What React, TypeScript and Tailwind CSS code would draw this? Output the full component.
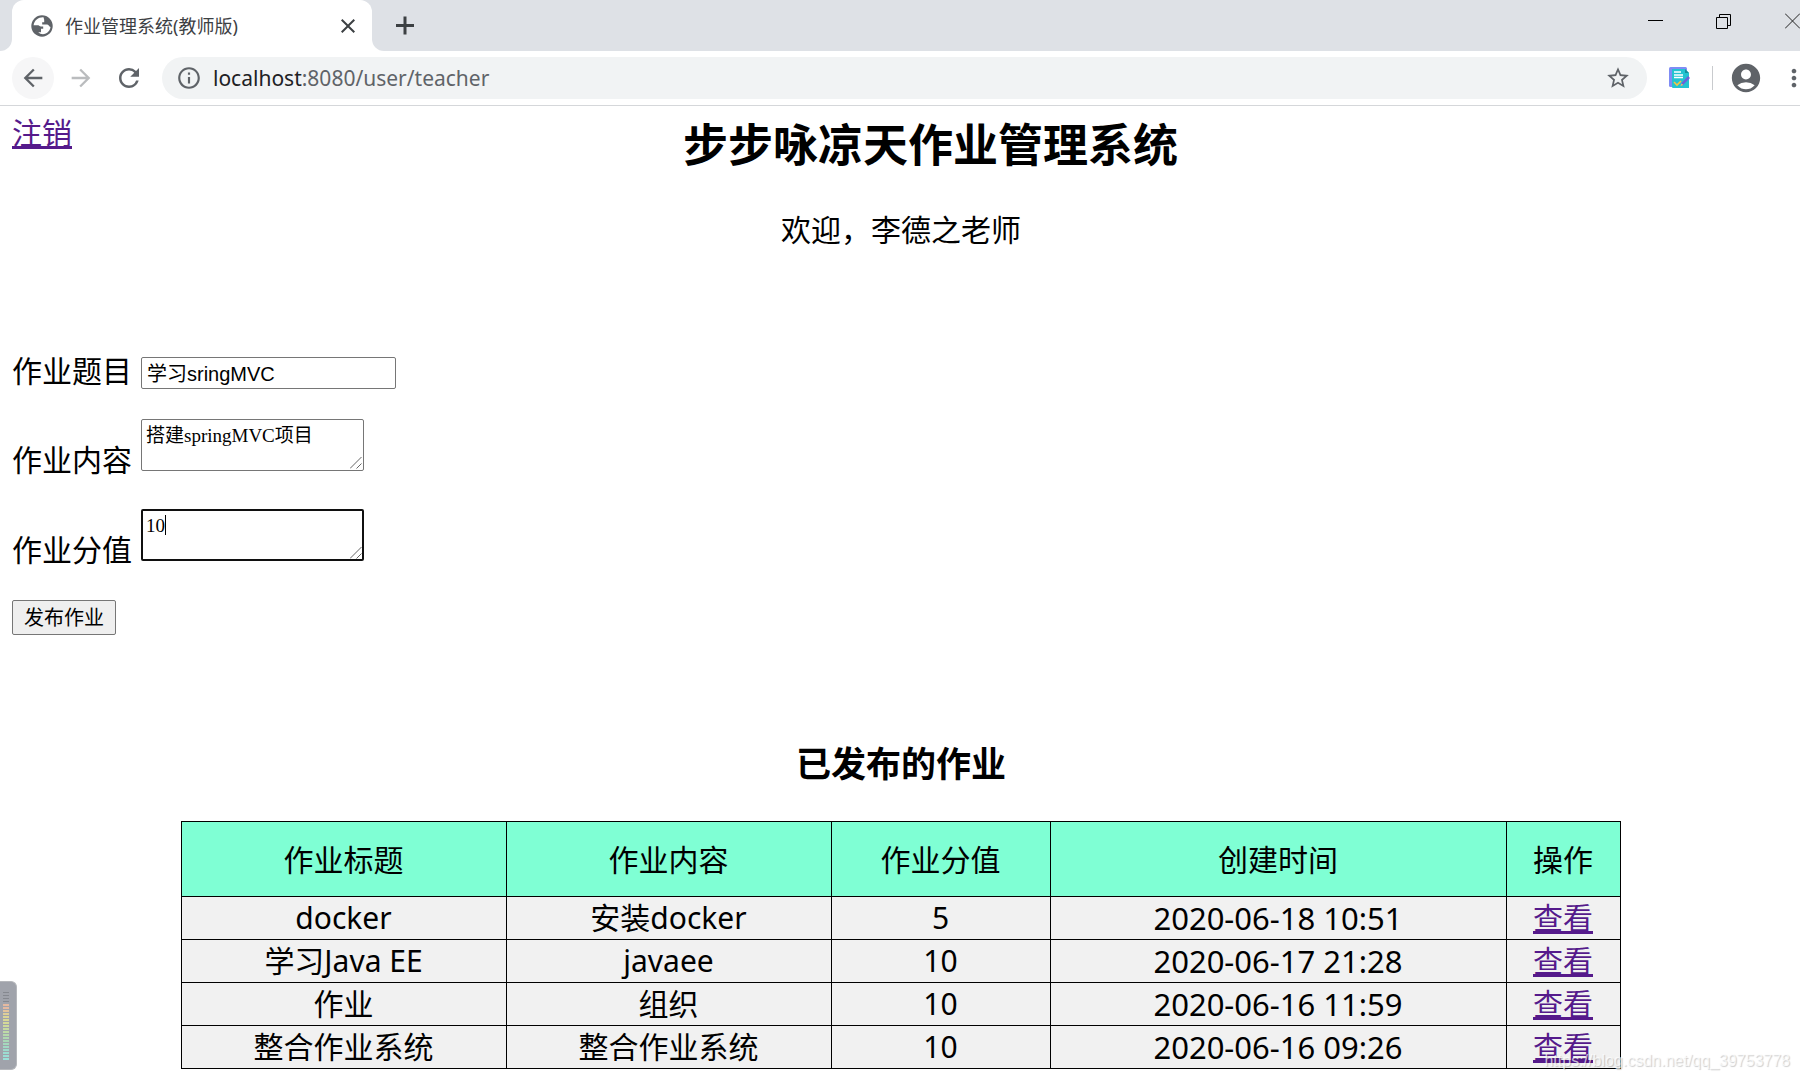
import { useEffect, useRef } from 'react'
import {
  MdAccountCircle,
  MdArrowBack,
  MdArrowForward,
  MdClose,
  MdInfoOutline,
  MdMoreVert,
  MdRefresh,
  MdStarBorder,
} from 'react-icons/md'

interface Homework {
  id: number
  title: string
  content: string
  score: number
  createdAt: string
}

const HOMEWORKS: Homework[] = [
  { id: 4, title: 'docker', content: '安装docker', score: 5, createdAt: '2020-06-18 10:51' },
  { id: 3, title: '学习Java EE', content: 'javaee', score: 10, createdAt: '2020-06-17 21:28' },
  { id: 2, title: '作业', content: '组织', score: 10, createdAt: '2020-06-16 11:59' },
  { id: 1, title: '整合作业系统', content: '整合作业系统', score: 10, createdAt: '2020-06-16 09:26' },
]

const COLUMNS = [
  { label: '作业标题', width: 'w-[325px]' },
  { label: '作业内容', width: 'w-[325px]' },
  { label: '作业分值', width: 'w-[219px]' },
  { label: '创建时间', width: 'w-[456px]' },
  { label: '操作', width: 'w-[114px]' },
]

// top to bottom
const METER_COLORS = [
  '#e5b9a0', '#e5b9a0', '#e2c49c', '#dfcf98', '#dbd596', '#d8d896', '#d5da98', '#cedb9c', '#c6dba1', '#bedaa6',
  '#b6d9ab', '#afd8b0', '#a9d8b6', '#a5d8bd', '#a1d8c4', '#9edacb', '#9cdcd1', '#9bded6', '#9be0d9',
]

function GlobeIcon() {
  return (
    <svg className="size-[22px]" viewBox="0 0 22 22">
      <circle cx="11" cy="11" r="10.700" fill="#5f6368" />
      <path
        d="M12.500 2.300C7.500 2 3.300 5.300 2.600 10.200h4.600c1.200 0 1.600 1.300 2.600 1.300h2.400v2.200H10v3.600H7.200c2.500 2.400 6.300 2.500 9 .5 1.800-1.400 3-3.500 3.300-5.800-1.500-.3-2-2.400-3.500-2.400h-4.800V7.200h2V4.800z"
        fill="#fff"
      />
    </svg>
  )
}

function TabStrip() {
  return (
    <div className="flex h-[51px] justify-between overflow-hidden bg-[#dee1e6]">
      <div className="flex">
        <div className="w-3 bg-white">
          <div className="h-full rounded-br-xl bg-[#dee1e6]" />
        </div>
        <div className="flex w-[360px] items-center rounded-t-xl bg-white pr-3 pl-[19px] text-[#3c4043]">
          <GlobeIcon />
          <span className="ml-3 flex-1 text-lg">作业管理系统(教师版)</span>
          <button type="button" aria-label="关闭标签页">
            <MdClose className="size-6" />
          </button>
        </div>
        <div className="w-3 bg-white">
          <div className="h-full rounded-bl-xl bg-[#dee1e6]" />
        </div>
        <button type="button" aria-label="打开新的标签页" className="ml-2 text-[#3c4043]">
          <svg className="size-7" viewBox="0 0 28 28" fill="none" stroke="currentColor" strokeWidth="3">
            <path d="M4 13.500h18M13 4.500v18" />
          </svg>
        </button>
      </div>
      <div className="flex h-[42px] items-center gap-[53px]">
        <button type="button" aria-label="最小化">
          <svg className="size-4" viewBox="0 0 16 16" fill="none" stroke="#000">
            <path d="M1 7.500h15" />
          </svg>
        </button>
        <button type="button" aria-label="还原">
          <svg className="size-4" viewBox="0 0 16 16" fill="none" stroke="#000">
            <path d="M0.500 4.500h11v11h-11zM3.500 4.500v-3h11v11h-3" />
          </svg>
        </button>
        <button type="button" aria-label="关闭">
          <svg className="h-4 w-[15px]" viewBox="0 0 15 16" fill="none" stroke="#222">
            <path d="M0 0.500l15 15M15 0.500l-15 15" />
          </svg>
        </button>
      </div>
    </div>
  )
}

function Toolbar() {
  return (
    <div className="flex h-[55px] items-center overflow-hidden border-b border-[#d5d7da] bg-white pl-3 text-[#5f6368]">
      <button type="button" aria-label="后退" className="flex size-[42px] items-center justify-center rounded-full bg-[#f6f6f7]">
        <MdArrowBack className="size-7" />
      </button>
      <button type="button" aria-label="前进" className="ml-[13px] text-[#babcbe]">
        <MdArrowForward className="size-7" />
      </button>
      <button type="button" aria-label="重新加载" className="ml-[19px]">
        <MdRefresh className="size-[30px]" />
      </button>
      <div className="ml-[18px] flex h-[42px] flex-1 items-center rounded-full bg-[#f1f3f4] pr-4 pl-[14px]">
        <MdInfoOutline className="size-[26px]" />
        <span className="ml-[11px] flex-1 pt-0.5 text-[21px]">
          <span className="text-[#202124]">localhost</span>:8080/user/teacher
        </span>
        <button type="button" aria-label="收藏">
          <MdStarBorder className="size-[26px]" />
        </button>
      </div>
      <button type="button" aria-label="扩展程序" className="ml-[22px]">
        <svg className="size-[22px]" viewBox="0 0 22 22">
          <rect x="0" y="0" width="18" height="20" rx="1.500" fill="#7f8cf5" />
          <path d="M3 2h13l4 4v15H4a1 1 0 0 1-1-1z" fill="#22c3d0" />
          <path d="M16 2v4h4z" fill="#148f9c" />
          <path d="M5 5h7M5 8h9M5 10.500h9" stroke="#fff" strokeWidth="1.400" />
          <path d="M5 15l3 3 4-4" fill="none" stroke="#f5c542" strokeWidth="1.600" />
          <path d="M19 9l2 2-7 7-2 1 .5-3z" fill="#6b62d9" />
          <path d="M12.500 16.500l1.800 1.500-2.800 1z" fill="#f3c56b" />
        </svg>
      </button>
      <div className="ml-[21px] h-6 w-px bg-[#c9cbce]" />
      <button type="button" aria-label="用户" className="ml-4">
        <MdAccountCircle className="size-[34px]" />
      </button>
      <button type="button" aria-label="更多" className="-mr-2 ml-[17px]">
        <MdMoreVert className="size-[28px]" />
      </button>
    </div>
  )
}

function ResizeGrip() {
  return (
    <svg
      className="pointer-events-none absolute right-0.5 bottom-0.5 size-3"
      viewBox="0 0 12 12"
      fill="none"
      stroke="#555"
      strokeWidth="0.900"
    >
      <path d="M0 11.500L11.500 0M6.500 11.500l5-5" />
    </svg>
  )
}

function HomeworkForm() {
  const scoreRef = useRef<HTMLTextAreaElement>(null)

  useEffect(() => {
    const el = scoreRef.current
    if (!el) return
    el.focus()
    el.setSelectionRange(el.value.length, el.value.length)
  }, [])

  return (
    <form className="flex flex-col items-start pl-3">
      <div className="flex h-10 items-center gap-[9px]">
        <label htmlFor="title" className="text-3xl">作业题目</label>
        <input
          id="title"
          type="text"
          defaultValue="学习sringMVC"
          className="mt-1 h-8 w-[255px] rounded-xs border border-[#767676] px-[5px] pb-0.5 font-['Liberation_Sans','Noto_Sans_CJK_SC',sans-serif] text-xl"
        />
      </div>
      <div className="mt-7 flex items-start gap-[9px]">
        <label htmlFor="content" className="mt-[23px] text-3xl">作业内容</label>
        <div className="relative">
          <textarea
            id="content"
            defaultValue="搭建springMVC项目"
            className="block h-[52px] w-[223px] resize-none overflow-hidden rounded-xs border border-[#767676] px-1 py-1 font-['Liberation_Serif','Noto_Sans_CJK_SC',serif] text-[19px]/6"
          />
          <ResizeGrip />
        </div>
      </div>
      <div className="mt-[31px] flex items-start gap-[9px]">
        <label htmlFor="score" className="mt-[23px] text-3xl">作业分值</label>
        <div className="relative">
          <textarea
            id="score"
            ref={scoreRef}
            defaultValue="10"
            className="block h-[52px] w-[223px] resize-none overflow-hidden rounded-xs border-2 border-[#101010] px-[3px] py-[3px] font-['Liberation_Serif','Noto_Sans_CJK_SC',serif] text-[19px]/6 caret-transparent outline-none"
          />
          {/* caret */}
          <div className="pointer-events-none absolute top-[6px] left-6 h-5 w-px bg-black" />
          <ResizeGrip />
        </div>
      </div>
      <button
        type="button"
        className="mt-8 h-[35px] rounded-xs border border-[#767676] bg-[#efefef] px-[11px] pt-px text-xl/8"
      >
        发布作业
      </button>
    </form>
  )
}

function HomeworkTable() {
  return (
    <div className="mt-[33px] pl-px">
      <table className="mx-auto w-4/5 table-fixed border-collapse text-center text-3xl/[42px]">
        <thead>
          <tr className="h-[75px] bg-[#7fffd4]">
            {COLUMNS.map((col) => (
              <th key={col.label} scope="col" className={`border border-black pt-0.5 font-normal ${col.width}`}>
                {col.label}
              </th>
            ))}
          </tr>
        </thead>
        <tbody>
          {HOMEWORKS.map((hw) => (
            <tr key={hw.id} className="h-[43px] bg-[#f1f1f1]">
              <td className="border border-black">{hw.title}</td>
              <td className="border border-black">{hw.content}</td>
              <td className="border border-black">{hw.score}</td>
              <td className="border border-black text-[31px]/[42px]">{hw.createdAt}</td>
              <td className="border border-black">
                <a href="#" className="text-[#551a8b] underline decoration-3">查看</a>
              </td>
            </tr>
          ))}
        </tbody>
      </table>
    </div>
  )
}

// Small level meter docked to the left edge of the screen
function LevelMeter() {
  return (
    <div className="absolute top-[981px] left-0 flex h-[89px] w-[17px] flex-col items-center gap-px rounded-r-md border border-l-0 border-[#b5b7bb] bg-[#a0a3ab] pt-[10px] pr-1">
      {[0, 1, 2, 3].map((i) => (
        <div key={i} className="mb-px h-px w-1.5 shrink-0 bg-[#85888f]" />
      ))}
      {METER_COLORS.map((color, i) => (
        <div key={i} className="h-0.5 w-1.5 shrink-0" style={{ backgroundColor: color }} />
      ))}
    </div>
  )
}

export default function App() {
  return (
    <div className="relative min-h-screen overflow-hidden bg-white font-['Noto_Sans','Noto_Sans_CJK_SC',sans-serif] text-black">
      <TabStrip />
      <Toolbar />
      <main>
        <div className="flex items-start pl-3">
          <a href="#" className="mt-[9px] text-3xl text-[#551a8b] underline decoration-3">注销</a>
          <h1 className="mt-[9px] flex-1 pr-[11px] text-center text-[45px]/[60px] font-bold">步步咏凉天作业管理系统</h1>
        </div>
        <p className="mt-[35px] pl-0.5 text-center text-3xl/10">欢迎，李德之老师</p>
        <div className="mt-[101px]">
          <HomeworkForm />
        </div>
        <h3 className="mt-[105px] pl-0.5 text-center text-[35px]/[48px] font-bold">已发布的作业</h3>
        <HomeworkTable />
      </main>
      <LevelMeter />
      <div className="pointer-events-none absolute right-[10px] bottom-[9px] font-['Liberation_Sans',sans-serif] text-base/5 text-white/70 [text-shadow:1px_1px_1px_rgba(0,0,0,0.2)]">
        https://blog.csdn.net/qq_39753778
      </div>
    </div>
  )
}
